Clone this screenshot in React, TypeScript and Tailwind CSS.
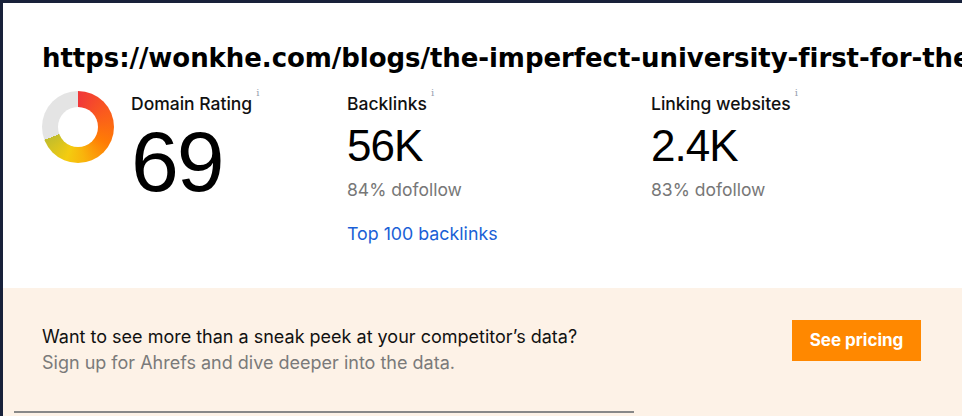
import { ReactNode } from 'react';

function Info() {
  return <span className="ml-[4px] -translate-y-[6px] inline-block text-[10px] leading-none text-gray-400 font-['DejaVu_Serif',serif]">i</span>;
}

function Label({ children }: { children: ReactNode }) {
  return (
    <div className="flex items-start text-[17.5px] leading-5 font-medium text-[#111] font-['Inter',sans-serif]">
      {children}
      <Info />
    </div>
  );
}

function Stat({ label, value, sub, link }: { label: string; value: string; sub: string; link?: string }) {
  return (
    <div className="w-[304px] shrink-0 pt-[3px]">
      <Label>{label}</Label>
      <div className="mt-[10px] text-[44px] leading-[44px] tracking-[-1px] text-black">{value}</div>
      <div className="mt-[12px] text-[17.5px] leading-5 text-[#777] font-['Inter',sans-serif]">{sub}</div>
      {link && <div className="mt-[24px] text-[17.8px] leading-5 text-[#1a5fd6] font-['Inter',sans-serif]">{link}</div>}
    </div>
  );
}

export default function App() {
  return (
    <div className="w-[962px] h-[416px] overflow-hidden bg-[#18213a] pt-[3px] pl-[3px] font-['Liberation_Sans',sans-serif]">
      <div className="h-full bg-white flex flex-col">
        {/* Header + stats */}
        <div className="h-[285px] pt-[39px] pl-[39px]">
          <h1 className="whitespace-nowrap text-[26px] leading-8 tracking-[-0.06px] font-bold text-black font-['DejaVu_Sans',sans-serif]">
            https://wonkhe.com/blogs/the-imperfect-university-first-for-the-class-of-2023
          </h1>
          <div className="mt-[17px] flex">
            <div className="w-[305px] shrink-0 flex">
              <div className="w-[72px] h-[72px] rounded-full bg-[conic-gradient(#f0373a_0deg,#fa5a1e_60deg,#ff7c05_120deg,#f9b40c_170deg,#f4cc10_200deg,#c2bd2c_249deg,#e4e4e4_249deg,#e4e4e4_360deg)] flex items-center justify-center">
                <div className="w-[40px] h-[40px] rounded-full bg-white" />
              </div>
              <div className="ml-[17px] pt-[3px]">
                <Label>Domain Rating</Label>
                <div className="mt-[4px] text-[86px] leading-[86px] tracking-[-2px] text-black">69</div>
              </div>
            </div>
            <Stat label="Backlinks" value="56K" sub="84% dofollow" link="Top 100 backlinks" />
            <Stat label="Linking websites" value="2.4K" sub="83% dofollow" />
          </div>
        </div>

        {/* Upsell */}
        <div className="flex-1 bg-[#fdf2e7] pl-[39px] pr-[41px] relative font-['Inter',sans-serif]">
          <div className="flex items-start justify-between pt-[32px]">
            <div className="pt-[5px]">
              <p className="text-[18px] leading-6 text-[#111]">Want to see more than a sneak peek at your competitor’s data?</p>
              <p className="mt-[2px] text-[18px] leading-6 text-[#7a7a7a]">Sign up for Ahrefs and dive deeper into the data.</p>
            </div>
            <button className="h-[41px] w-[129px] bg-[#ff8800] text-white font-bold text-[17px]">See pricing</button>
          </div>
          <div className="absolute left-[11px] bottom-[3px] w-[620px] h-[2px] bg-[#888]" />
        </div>
      </div>
    </div>
  );
}
